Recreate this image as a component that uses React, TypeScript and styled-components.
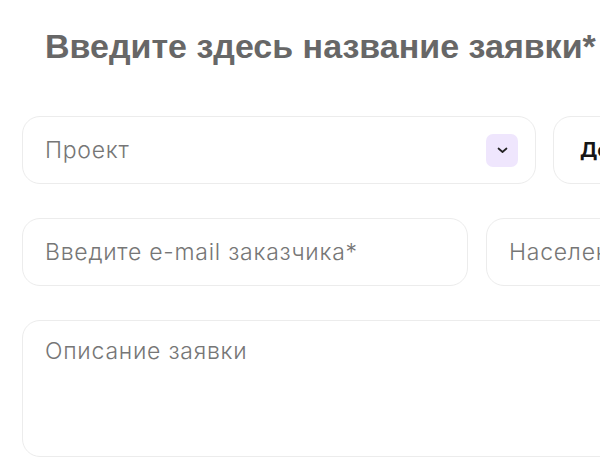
import React from "react";
import styled, { createGlobalStyle } from "styled-components";

const GlobalStyle = createGlobalStyle`
  html, body {
    margin: 0;
    padding: 0;
    background: #ffffff;
    overflow: hidden;
  }
`;

const Form = styled.div`
  width: 1160px;
  padding: 27px 0 0 22px;
  display: flex;
  flex-direction: column;
  font-family: "Inter", "Liberation Sans", sans-serif;
`;

const Title = styled.h1`
  margin: 0 0 50px 23px;
  font-family: "Liberation Sans", Arial, sans-serif;
  font-weight: 700;
  font-size: 34px;
  line-height: 39px;
  color: #676767;
  white-space: nowrap;
`;

const Row = styled.div<{ first: number; gap: number }>`
  display: grid;
  grid-template-columns: ${(p) => p.first}px 1fr;
  column-gap: ${(p) => p.gap}px;
  margin-bottom: 34px;
`;

const Field = styled.div<{ pad?: number }>`
  box-sizing: border-box;
  height: 68px;
  border: 1px solid #ececec;
  border-radius: 18px;
  background: #fff;
  display: flex;
  align-items: center;
  justify-content: space-between;
  padding: 0 17px 0 ${(p) => p.pad ?? 22}px;
`;

const Placeholder = styled.span`
  font-size: 23px;
  font-weight: 300;
  letter-spacing: 0.75px;
  color: #767676;
  white-space: nowrap;
`;

const ButtonLabel = styled.span`
  font-size: 20px;
  font-weight: 700;
  color: #161616;
  white-space: nowrap;
`;

const Chevron = styled.span`
  width: 32px;
  height: 33px;
  border-radius: 7px;
  background: #efe6fd;
  display: flex;
  align-items: center;
  justify-content: center;
`;

const Area = styled.div`
  box-sizing: border-box;
  height: 137px;
  border: 1px solid #ececec;
  border-radius: 18px;
  padding: 16px 22px;
`;

export default function App() {
  return (
    <>
      <GlobalStyle />
      <Form>
        <Title>Введите здесь название заявки*</Title>
        <Row first={514} gap={17}>
          <Field>
            <Placeholder>Проект</Placeholder>
            <Chevron>
              <svg width="11" height="7" viewBox="0 0 11 7" fill="none">
                <path d="M1.5 1.5 5.5 5 9.5 1.5" stroke="#222" strokeWidth="1.7" strokeLinecap="round" strokeLinejoin="round" />
              </svg>
            </Chevron>
          </Field>
          <Field pad={26}>
            <ButtonLabel>Дедлайн</ButtonLabel>
          </Field>
        </Row>
        <Row first={446} gap={18}>
          <Field>
            <Placeholder>Введите e-mail заказчика*</Placeholder>
          </Field>
          <Field>
            <Placeholder>Населенный пункт</Placeholder>
          </Field>
        </Row>
        <Area>
          <Placeholder>Описание заявки</Placeholder>
        </Area>
      </Form>
    </>
  );
}
